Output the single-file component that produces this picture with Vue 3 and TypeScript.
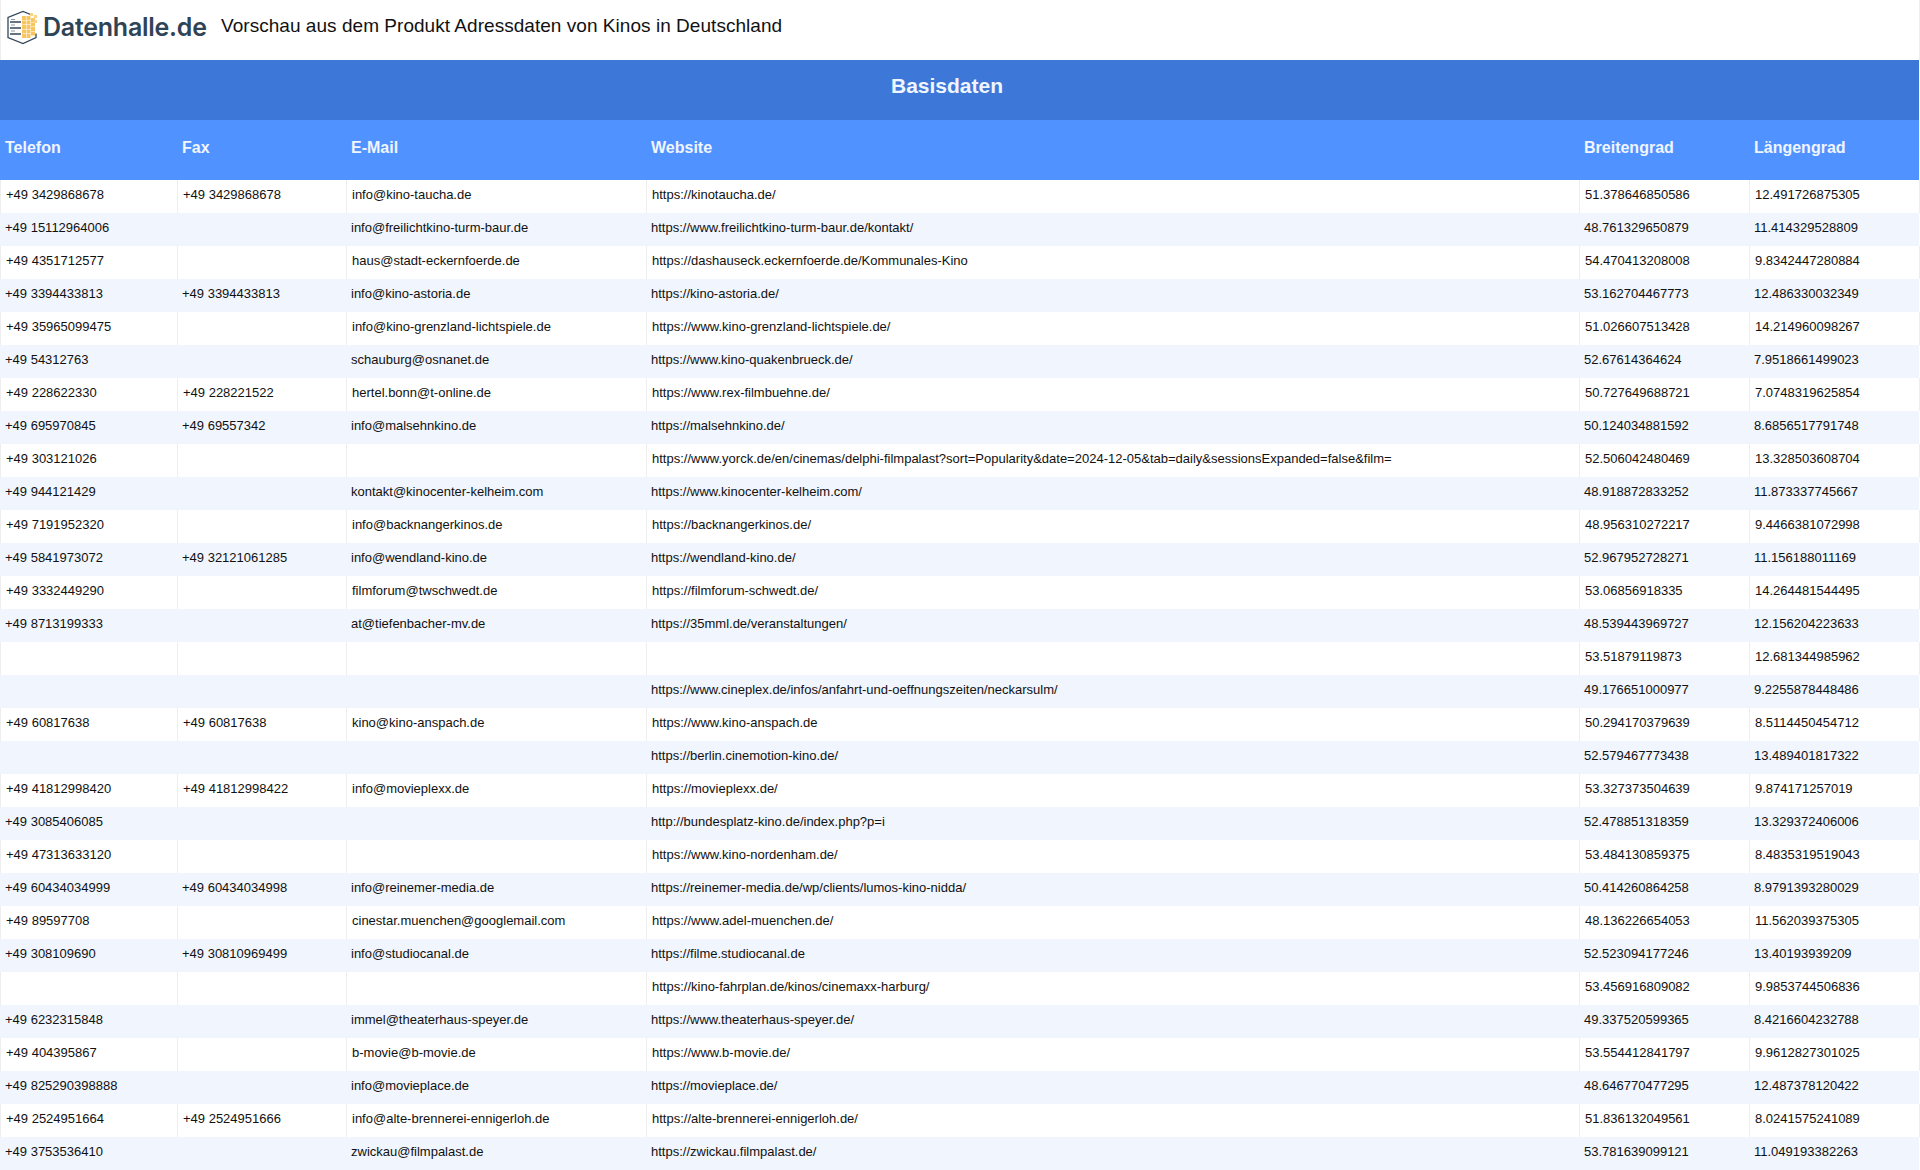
<script setup lang="ts">
const columns: string[] = ['Telefon', 'Fax', 'E-Mail', 'Website', 'Breitengrad', 'Längengrad']
const rows: string[][] = [
  ['+49 3429868678', '+49 3429868678', 'info@kino-taucha.de', 'https://kinotaucha.de/', '51.378646850586', '12.491726875305'],
  ['+49 15112964006', '', 'info@freilichtkino-turm-baur.de', 'https://www.freilichtkino-turm-baur.de/kontakt/', '48.761329650879', '11.414329528809'],
  ['+49 4351712577', '', 'haus@stadt-eckernfoerde.de', 'https://dashauseck.eckernfoerde.de/Kommunales-Kino', '54.470413208008', '9.8342447280884'],
  ['+49 3394433813', '+49 3394433813', 'info@kino-astoria.de', 'https://kino-astoria.de/', '53.162704467773', '12.486330032349'],
  ['+49 35965099475', '', 'info@kino-grenzland-lichtspiele.de', 'https://www.kino-grenzland-lichtspiele.de/', '51.026607513428', '14.214960098267'],
  ['+49 54312763', '', 'schauburg@osnanet.de', 'https://www.kino-quakenbrueck.de/', '52.67614364624', '7.9518661499023'],
  ['+49 228622330', '+49 228221522', 'hertel.bonn@t-online.de', 'https://www.rex-filmbuehne.de/', '50.727649688721', '7.0748319625854'],
  ['+49 695970845', '+49 69557342', 'info@malsehnkino.de', 'https://malsehnkino.de/', '50.124034881592', '8.6856517791748'],
  ['+49 303121026', '', '', 'https://www.yorck.de/en/cinemas/delphi-filmpalast?sort=Popularity&date=2024-12-05&tab=daily&sessionsExpanded=false&film=', '52.506042480469', '13.328503608704'],
  ['+49 944121429', '', 'kontakt@kinocenter-kelheim.com', 'https://www.kinocenter-kelheim.com/', '48.918872833252', '11.873337745667'],
  ['+49 7191952320', '', 'info@backnangerkinos.de', 'https://backnangerkinos.de/', '48.956310272217', '9.4466381072998'],
  ['+49 5841973072', '+49 32121061285', 'info@wendland-kino.de', 'https://wendland-kino.de/', '52.967952728271', '11.156188011169'],
  ['+49 3332449290', '', 'filmforum@twschwedt.de', 'https://filmforum-schwedt.de/', '53.06856918335', '14.264481544495'],
  ['+49 8713199333', '', 'at@tiefenbacher-mv.de', 'https://35mml.de/veranstaltungen/', '48.539443969727', '12.156204223633'],
  ['', '', '', '', '53.51879119873', '12.681344985962'],
  ['', '', '', 'https://www.cineplex.de/infos/anfahrt-und-oeffnungszeiten/neckarsulm/', '49.176651000977', '9.2255878448486'],
  ['+49 60817638', '+49 60817638', 'kino@kino-anspach.de', 'https://www.kino-anspach.de', '50.294170379639', '8.5114450454712'],
  ['', '', '', 'https://berlin.cinemotion-kino.de/', '52.579467773438', '13.489401817322'],
  ['+49 41812998420', '+49 41812998422', 'info@movieplexx.de', 'https://movieplexx.de/', '53.327373504639', '9.874171257019'],
  ['+49 3085406085', '', '', 'http://bundesplatz-kino.de/index.php?p=i', '52.478851318359', '13.329372406006'],
  ['+49 47313633120', '', '', 'https://www.kino-nordenham.de/', '53.484130859375', '8.4835319519043'],
  ['+49 60434034999', '+49 60434034998', 'info@reinemer-media.de', 'https://reinemer-media.de/wp/clients/lumos-kino-nidda/', '50.414260864258', '8.9791393280029'],
  ['+49 89597708', '', 'cinestar.muenchen@googlemail.com', 'https://www.adel-muenchen.de/', '48.136226654053', '11.562039375305'],
  ['+49 308109690', '+49 30810969499', 'info@studiocanal.de', 'https://filme.studiocanal.de', '52.523094177246', '13.40193939209'],
  ['', '', '', 'https://kino-fahrplan.de/kinos/cinemaxx-harburg/', '53.456916809082', '9.9853744506836'],
  ['+49 6232315848', '', 'immel@theaterhaus-speyer.de', 'https://www.theaterhaus-speyer.de/', '49.337520599365', '8.4216604232788'],
  ['+49 404395867', '', 'b-movie@b-movie.de', 'https://www.b-movie.de/', '53.554412841797', '9.9612827301025'],
  ['+49 825290398888', '', 'info@movieplace.de', 'https://movieplace.de/', '48.646770477295', '12.487378120422'],
  ['+49 2524951664', '+49 2524951666', 'info@alte-brennerei-ennigerloh.de', 'https://alte-brennerei-ennigerloh.de/', '51.836132049561', '8.0241575241089'],
  ['+49 3753536410', '', 'zwickau@filmpalast.de', 'https://zwickau.filmpalast.de/', '53.781639099121', '11.049193382263'],
]
const blocks: number[][] = [
  [21, 16], [25.5, 16], [30, 18],
  [21, 20.5], [25.5, 20.5], [30, 22.5],
  [21, 25], [25.5, 25], [30, 27],
  [21, 29.5], [25.5, 29.5], [30, 31.5],
  [21, 34], [25.5, 34],
]
const chips: number[][] = [[29, 13], [33, 15], [33, 20]]
</script>

<template>
  <div class="page">
    <header class="top">
      <div class="brand">
        <svg class="mark" width="38" height="38" viewBox="0 0 38 38" aria-hidden="true">
          <g transform="translate(-5,-8)">
            <path d="M32 15.500 22 11.500 7 17.500v20l15 6 13-6v-4" fill="none" stroke="#33475b" stroke-width="1.3" />
            <path d="M9 22h11M9 28h11M9 34h11" stroke="#33475b" stroke-width="1.500" />
            <path d="M10 19.500h4M10 25h4M10 31h4" stroke="#8b97a3" stroke-width="1.2" />
            <rect v-for="b in blocks" :key="b.join()" :x="b[0]" :y="b[1]" width="4" height="4" fill="#f7c65f" />
            <rect v-for="c in chips" :key="c.join()" :x="c[0]" :y="c[1]" width="3" height="3" fill="#f9d486" />
          </g>
        </svg>
        <span class="wordmark">Datenhalle.de</span>
      </div>
      <h1 class="title">Vorschau aus dem Produkt Adressdaten von Kinos in Deutschland</h1>
    </header>
    <div class="band">Basisdaten</div>
    <div class="grid heads">
      <div v-for="c in columns" :key="c" class="head">{{ c }}</div>
    </div>
    <div v-for="(r, i) in rows" :key="i" class="grid row" :class="i % 2 ? 'even' : 'odd'">
      <div v-for="(v, j) in r" :key="j" class="cell">{{ v }}</div>
    </div>
  </div>
</template>

<style scoped>
.page {
  width: 1920px;
  font-family: "Liberation Sans", Arial, sans-serif;
  color: #111;
  background: #fff;
}
.top {
  height: 60px;
  display: flex;
  align-items: flex-start;
  box-sizing: border-box;
  border-left: 1px solid #eee;
  border-right: 1px solid #eee;
}
.brand {
  display: flex;
  align-items: center;
  height: 54px;
  margin-left: 5px;
}
.mark {
  display: block;
  flex: none;
}
.wordmark {
  font-family: Inter, sans-serif;
  font-weight: 600;
  font-size: 25px;
  letter-spacing: -0.25px;
  margin-left: -1px;
  color: #2f4356;
  width: 178px;
}
.title {
  margin: 14px 0 0;
  font-size: 19px;
  letter-spacing: 0.04px;
  font-weight: 400;
  line-height: 24px;
  color: #111;
}
.band {
  width: 1919px;
  height: 60px;
  box-sizing: border-box;
  background: #3d78d8;
  color: #f0f5ff;
  font-size: 21px;
  font-weight: 700;
  text-align: center;
  padding: 14px 25px 0 0;
  line-height: 24px;
}
.grid {
  display: grid;
  grid-template-columns: 177px 169px 300px 933px 170px 171px;
}
.heads {
  width: 1919px;
  grid-template-columns: 177px 169px 300px 933px 170px 170px;
  height: 60px;
  background: #5092ff;
}
.head {
  padding: 18px 0 0 5px;
  font-size: 16px;
  line-height: 20px;
  font-weight: 700;
  color: #f0f5ff;
}
.row {
  height: 33px;
  font-size: 13px;
  line-height: 16px;
}
.cell {
  box-sizing: border-box;
  white-space: nowrap;
  overflow: hidden;
  padding: 7px 0 0 5px;
}
.even {
  width: 1919px;
  grid-template-columns: 177px 169px 300px 933px 170px 170px;
  background: #f0f5fe;
}
.odd .cell {
  background: #fff;
  border-left: 1px solid #eee;
}
.odd .cell:last-child {
  border-right: 1px solid #eee;
}
</style>

<style>
html,
body {
  margin: 0;
  background: #fff;
  overflow: hidden;
}
</style>
